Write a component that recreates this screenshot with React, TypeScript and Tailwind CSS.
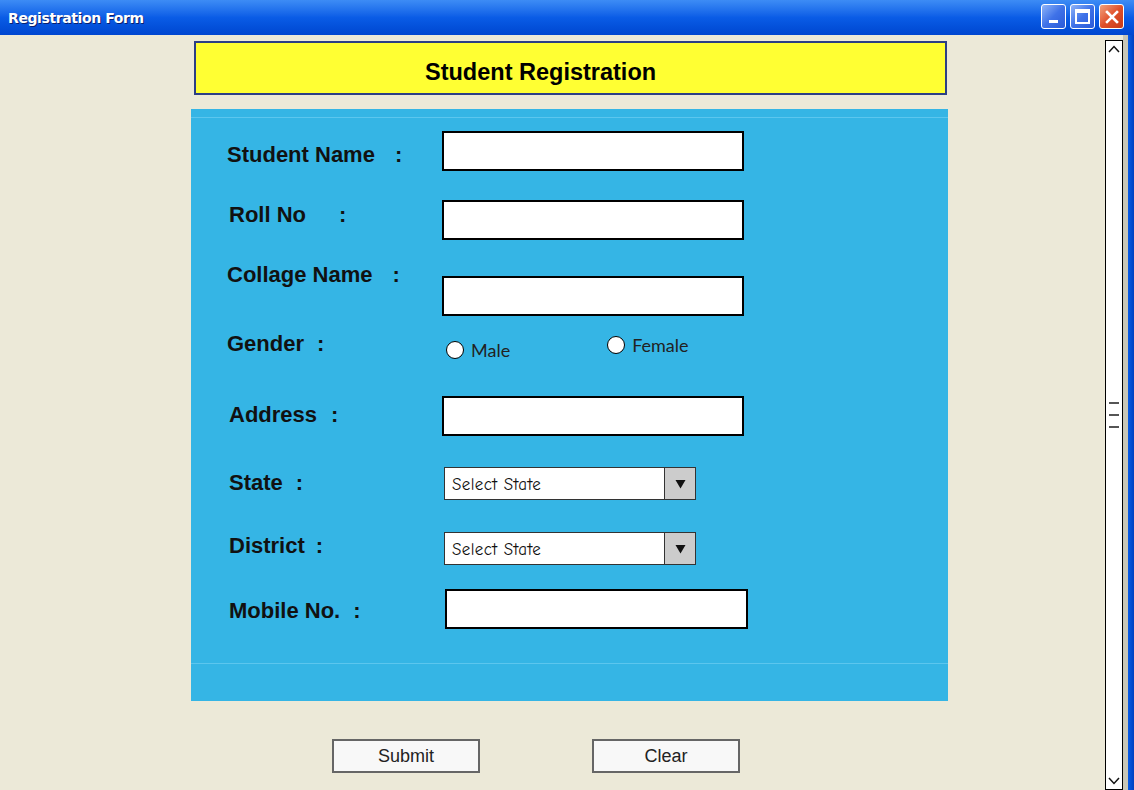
import type { ReactNode } from 'react';

const labelFont = { fontFamily: '"Liberation Sans", Arial, sans-serif' };

function TextBox({ className = '' }: { className?: string }) {
  return <div className={`h-[40px] w-[302px] border-2 border-black bg-white ${className}`} />;
}

function SelectBox() {
  return (
    <div className="ml-[2px] flex h-[33px] w-[252px] border border-[#333] bg-white">
      <div
        className="flex flex-1 items-center pl-[7px] pt-[2px] text-[17px] tracking-[0.4px] text-[#111]"
        style={{ fontFamily: '"Comic Sans MS", "Comic Neue", cursive' }}
      >
        Select State
      </div>
      <div className="flex w-[31px] items-center justify-center border-l border-[#333] bg-[#cccccc]">
        <svg width="11" height="10" viewBox="0 0 11 10">
          <path d="M0.5 1 L10.5 1 L5.5 9.5 Z" fill="#111" />
        </svg>
      </div>
    </div>
  );
}

function Radio({ label }: { label: string }) {
  return (
    <div className="flex items-center">
      <span className="h-[18px] w-[18px] rounded-full border-[1.5px] border-black bg-white" />
      <span className="ml-[7px] text-[18px] leading-[22px] text-[#222]" style={{ fontFamily: 'Lato, sans-serif' }}>
        {label}
      </span>
    </div>
  );
}

interface RowProps {
  label: string;
  colonGap: number;
  labelX: 36 | 38;
  labelTop: string;
  height: string;
  children: ReactNode;
}

function Row({ label, colonGap, labelX, labelTop, height, children }: RowProps) {
  return (
    <div className={`flex items-start ${height}`}>
      <div
        className={`${labelX === 36 ? 'ml-[36px] w-[215px]' : 'ml-[38px] w-[213px]'} ${labelTop} whitespace-nowrap text-[22px] font-bold leading-[26px] text-[#111]`}
        style={labelFont}
      >
        {label}
        <span style={{ marginLeft: colonGap }}>:</span>
      </div>
      {children}
    </div>
  );
}

function XpButton({ children, close }: { children: ReactNode; close?: boolean }) {
  return (
    <div
      className={`flex h-[25px] w-[25px] items-center justify-center rounded-[3px] border border-white ${
        close
          ? 'bg-gradient-to-br from-[#f0a07c] via-[#e0502a] to-[#c73a17]'
          : 'bg-gradient-to-br from-[#8fb3f7] via-[#3f72e8] to-[#2a5ad8]'
      }`}
    >
      {children}
    </div>
  );
}

export default function App() {
  return (
    <div className="flex h-[790px] w-[1134px] flex-col overflow-hidden bg-[#ECE9D8]">
      {/* title bar */}
      <div className="flex h-[35px] shrink-0 items-center justify-between bg-gradient-to-b from-[#3d8cf5] via-[#0a5ce6] to-[#0046d0] pl-[8px] pr-[10px]">
        <span
          className="pt-px text-[14px] font-bold text-white"
          style={{ fontFamily: '"DejaVu Sans", Verdana, sans-serif', textShadow: '1px 1px 0 #0a1f6e', letterSpacing: '-0.4px' }}
        >
          Registration Form
        </span>
        <div className="flex gap-[4px] pb-[2px]">
          <XpButton>
            <span className="mt-[10px] h-[3px] w-[9px] bg-white" />
          </XpButton>
          <XpButton>
            <span className="h-[15px] w-[15px] border-2 border-t-[4px] border-white" />
          </XpButton>
          <XpButton close>
            <svg width="14" height="14" viewBox="0 0 14 14">
              <path d="M2 2 L12 12 M12 2 L2 12" stroke="white" strokeWidth="2.6" strokeLinecap="square" />
            </svg>
          </XpButton>
        </div>
      </div>

      <div className="flex flex-1">
        {/* page content */}
        <div className="flex-1">
          <div className="ml-[194px] mt-[6px] h-[54px] w-[753px] border-2 border-[#2c3f85] bg-[#FFFF33] pl-[229px] pt-[15px]">
            <span className="text-[23.5px] font-bold leading-[28px] text-black" style={labelFont}>
              Student Registration
            </span>
          </div>

          <div className="ml-[191px] mt-[14px] w-[757px] bg-[#35B5E5]">
            <div className="h-[8px]" />
            <div className="h-px bg-[#5cc6ee]" />
            <div className="h-[13px]" />

            <Row label="Student Name" colonGap={20} labelX={36} labelTop="mt-[11px]" height="h-[69px]">
              <TextBox />
            </Row>
            <Row label="Roll No" colonGap={33} labelX={38} labelTop="mt-[2px]" height="h-[62px]">
              <TextBox />
            </Row>
            <Row label="Collage Name" colonGap={20} labelX={36} labelTop="mt-0" height="h-[69px]">
              <TextBox className="mt-[14px]" />
            </Row>
            <Row label="Gender" colonGap={13} labelX={36} labelTop="mt-0" height="h-[65px]">
              <div className="ml-[4px] mt-[8px]">
                <Radio label="Male" />
              </div>
              <div className="ml-[97px] mt-[3px]">
                <Radio label="Female" />
              </div>
            </Row>
            <Row label="Address" colonGap={14} labelX={38} labelTop="mt-[6px]" height="h-[71px]">
              <TextBox />
            </Row>
            <Row label="State" colonGap={13} labelX={38} labelTop="mt-[3px]" height="h-[65px]">
              <SelectBox />
            </Row>
            <Row label="District" colonGap={11} labelX={38} labelTop="mt-px" height="h-[57px]">
              <SelectBox />
            </Row>
            <Row label="Mobile No." colonGap={13} labelX={38} labelTop="mt-[9px]" height="h-[40px]">
              <TextBox className="ml-[3px] w-[303px]" />
            </Row>

            <div className="h-[34px]" />
            <div className="h-px bg-[#5cc6ee]" />
            <div className="h-[37px]" />
          </div>

          <div className="ml-[332px] mt-[38px] flex gap-[112px]">
            {['Submit', 'Clear'].map((b) => (
              <div
                key={b}
                className="flex h-[34px] w-[148px] items-center justify-center border-2 border-[#666] bg-[#f8f8f8] text-[18px] text-[#222]"
                style={labelFont}
              >
                {b}
              </div>
            ))}
          </div>
        </div>

        {/* scrollbar */}
        <div className="mt-[5px] flex w-[18px] flex-col items-center justify-between border border-black bg-white py-[4px]">
          <svg width="12" height="8" viewBox="0 0 12 8">
            <path d="M1 7 L6 1.5 L11 7" stroke="#111" strokeWidth="1.5" fill="none" />
          </svg>
          <div className="flex flex-col gap-[10px]">
            <span className="h-[2px] w-[10px] bg-[#555]" />
            <span className="h-[2px] w-[10px] bg-[#555]" />
            <span className="h-[2px] w-[10px] bg-[#555]" />
          </div>
          <svg width="12" height="8" viewBox="0 0 12 8">
            <path d="M1 1 L6 6.5 L11 1" stroke="#111" strokeWidth="1.5" fill="none" />
          </svg>
        </div>
        <div className="w-[5px] bg-[#c9c6b6]" />
        <div className="w-[6px] bg-gradient-to-r from-[#0a5ce6] to-[#0040c0]" />
      </div>
    </div>
  );
}
